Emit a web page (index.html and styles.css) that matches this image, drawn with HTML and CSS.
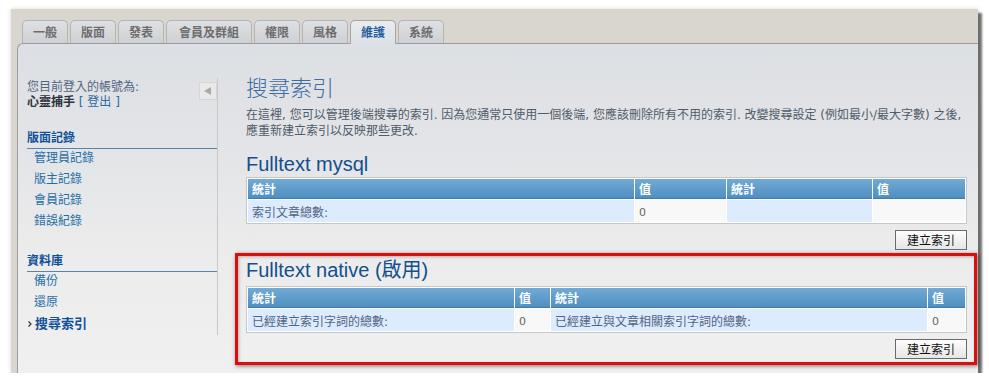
FILE: index.html
```html
<!DOCTYPE html>
<html lang="zh-Hant">
<head>
<meta charset="utf-8">
<title>搜尋索引</title>
<link rel="stylesheet" href="styles.css">
</head>
<body>
<div class="frame">
  <ul class="tabs">
    <li class="tab">一般</li>
    <li class="tab">版面</li>
    <li class="tab">發表</li>
    <li class="tab tab-wide">會員及群組</li>
    <li class="tab">權限</li>
    <li class="tab">風格</li>
    <li class="tab tab-active">維護</li>
    <li class="tab">系統</li>
  </ul>
  <div class="panel">
    <aside class="side">
      <div class="user">
        <div class="user-text">
          <div>您目前登入的帳號為:</div>
          <div><b class="user-name">心靈捕手</b> <a class="logout">[ 登出 ]</a></div>
        </div>
        <span class="collapse">
          <svg width="18" height="18" viewBox="0 0 18 18">
            <rect x="0.5" y="0.5" width="17" height="17" fill="#e9e9e9" stroke="#d6d6d6"/>
            <polygon points="5,9 12,5 12,13" fill="#a9a9a9"/>
          </svg>
        </span>
      </div>
      <h3 class="menu-head">版面記錄</h3>
      <ul class="menu">
        <li>管理員記錄</li>
        <li>版主記錄</li>
        <li>會員記錄</li>
        <li>錯誤紀錄</li>
      </ul>
      <h3 class="menu-head menu-head-gap">資料庫</h3>
      <ul class="menu">
        <li>備份</li>
        <li>還原</li>
        <li class="active"><svg class="chev" width="4" height="6" viewBox="0 0 4 6"><polyline points="0.5,0.5 3,3 0.5,5.5" fill="none" stroke="#333" stroke-width="1.2"/></svg>搜尋索引</li>
      </ul>
    </aside>
    <main class="main">
      <h1 class="title">搜尋索引</h1>
      <p class="desc">在這裡, 您可以管理後端搜尋的索引. 因為您通常只使用一個後端, 您應該刪除所有不用的索引. 改變搜尋設定 (例如最小/最大字數) 之後, 應重新建立索引以反映那些更改.</p>

      <h2 class="sect-title">Fulltext mysql</h2>
      <table class="stats">
        <thead>
          <tr>
            <th class="m1">統計</th>
            <th class="m2">值</th>
            <th class="m3">統計</th>
            <th class="m4">值</th>
          </tr>
        </thead>
        <tbody>
          <tr>
            <td class="lbl">索引文章總數:</td>
            <td class="val">0</td>
            <td class="lbl"></td>
            <td class="val"></td>
          </tr>
        </tbody>
      </table>
      <div class="actions"><button class="btn" type="button">建立索引</button></div>

      <section class="hl">
        <h2 class="sect-title sect-title-hl">Fulltext native (啟用)</h2>
        <table class="stats">
          <thead>
            <tr>
              <th class="n1">統計</th>
              <th class="n2">值</th>
              <th class="n3">統計</th>
              <th class="n4">值</th>
            </tr>
          </thead>
          <tbody>
            <tr>
              <td class="lbl">已經建立索引字詞的總數:</td>
              <td class="val">0</td>
              <td class="lbl">已經建立與文章相關索引字詞的總數:</td>
              <td class="val">0</td>
            </tr>
          </tbody>
        </table>
        <div class="actions"><button class="btn" type="button">建立索引</button></div>
      </section>
    </main>
  </div>
</div>
</body>
</html>
```

FILE: styles.css
```css
* { box-sizing: border-box; }

html, body {
  margin: 0;
  padding: 0;
  background: #fff;
}

body {
  font-family: "DejaVu Sans", "Noto Sans CJK TC", sans-serif;
  font-size: 12px;
  color: #536482;
}

.frame {
  width: 967px;
  height: 364px;
  margin: 9px 0 0 11px;
  background: #d9d6d0;
  box-shadow: 4px 4px 2px rgba(0, 0, 0, 0.55), 0 0 5px rgba(0, 0, 0, 0.15);
  display: flex;
  flex-direction: column;
}

/* Tabs */
.tabs {
  list-style: none;
  margin: 0;
  padding: 11px 0 0 11px;
  height: 34px;
  display: flex;
  align-items: flex-start;
  gap: 2px;
  flex: none;
}

.tab {
  height: 23px;
  padding: 0 10px;
  border: 1px solid #b4b4b4;
  border-bottom: 0;
  border-radius: 5px 5px 0 0;
  background: linear-gradient(#dfe0e3, #cdd0d4);
  font-family: "Noto Sans CJK TC", sans-serif;
  font-weight: bold;
  font-size: 12px;
  line-height: 21px;
  color: #6d6d6d;
}

.tab-wide { padding: 0 12px; }

.tab-active {
  height: 24px;
  margin-bottom: -1px;
  position: relative;
  z-index: 1;
  border-color: #a5a5a5;
  background: linear-gradient(#eaecef, #dde0e4);
  color: #1f5e9e;
}

/* Panel */
.panel {
  flex: 1;
  margin-left: 6px;
  display: flex;
  border-top: 1px solid #9d9d9d;
  border-left: 1px solid #9d9d9d;
  border-top-left-radius: 6px;
  background: linear-gradient(180deg, #dcdfe3 0%, #e4e5e8 35%, #ececec 65%, #f0f0f0 100%);
  min-height: 0;
}

/* Sidebar */
.side {
  width: 200px;
  flex: none;
  margin-top: 34px;
  height: 257px;
  border-right: 1px solid #c8c8c8;
  padding: 2px 0 0 9px;
}

.user {
  display: flex;
  justify-content: space-between;
  line-height: 15px;
  color: #536482;
}

.user-name {
  color: #2b3440;
}

.logout {
  color: #2e6aa6;
}

.collapse {
  display: block;
  width: 18px;
  height: 18px;
  margin-top: 2px;
}

.collapse svg { display: block; }

.menu-head {
  margin: 20px 0 0;
  font-size: 12px;
  line-height: 16px;
  padding-bottom: 2px;
  border-bottom: 1px solid #5b84ad;
  color: #115098;
  font-weight: bold;
}

.menu-head-gap { margin-top: 21px; }

.menu {
  list-style: none;
  margin: -1px 0 0;
  padding: 0;
  line-height: 21px;
}

.menu li {
  padding-left: 7px;
  color: #1f6fa8;
}

.menu li.active {
  padding-left: 0;
  display: flex;
  align-items: center;
  font-weight: bold;
  font-size: 13px;
  color: #115098;
}

.chev {
  display: block;
  margin: 0 3px 0 1px;
}

/* Main */
.main {
  flex: 1;
  min-width: 0;
  padding: 29px 11px 0 28px;
}

.title {
  margin: 0;
  font-family: "Noto Sans CJK TC", sans-serif;
  font-size: 22px;
  line-height: 26px;
  font-weight: 300;
  color: #3d6da3;
}

.desc {
  margin: 8px 0 0;
  line-height: 16px;
  color: #4f5b69;
}

.sect-title {
  margin: 14px 0 2px;
  font-family: "Liberation Sans", "Noto Sans CJK TC", sans-serif;
  font-size: 20px;
  line-height: 22px;
  font-weight: normal;
  color: #134f8c;
}

.sect-title-hl { margin: 0 0 5px; }

.stats {
  width: 100%;
  table-layout: fixed;
  border: 1px solid #c6c6c6;
  border-spacing: 1px;
  background: #fff;
}

.stats th {
  height: 20px;
  padding: 0 4px;
  text-align: left;
  color: #fff;
  font-family: "Noto Sans CJK TC", sans-serif;
  font-weight: bold;
  font-size: 12px;
  background: linear-gradient(#72aad5, #4f8fc1);
  border-bottom: 1px solid #3f7aab;
}

.m1 { width: 386px; }
.m2 { width: 91px; }
.m3 { width: 145px; }
.m4 { width: 92px; }

.n1 { width: 266px; }
.n2 { width: 35px; }
.n3 { width: 376px; }
.n4 { width: 37px; }

.stats td {
  height: 22px;
  padding: 0 4px;
  font-size: 12px;
}

.stats td.lbl {
  background: #dcebfe;
  color: #536482;
}

.stats td.val {
  background: #f8f8f8;
  color: #666;
  font-size: 11px;
  padding-top: 3px;
}

.actions {
  margin-top: 6px;
  text-align: right;
  line-height: 0;
}

.btn {
  width: 72px;
  height: 20px;
  padding: 0;
  border: 1px solid #6b6b6b;
  background: linear-gradient(#fdfdfd, #e6e6e6);
  font-family: "Noto Sans CJK TC", sans-serif;
  font-size: 12px;
  line-height: 18px;
  color: #111;
}

/* Highlight annotation */
.hl {
  margin: 3px -10px 0 -11px;
  border: 3px solid #dc0d0d;
  padding: 3px 7px 3px 8px;
  box-shadow: 1px 1px 4px rgba(0, 0, 0, 0.5), inset 1px 1px 3px rgba(0, 0, 0, 0.25);
}
```
